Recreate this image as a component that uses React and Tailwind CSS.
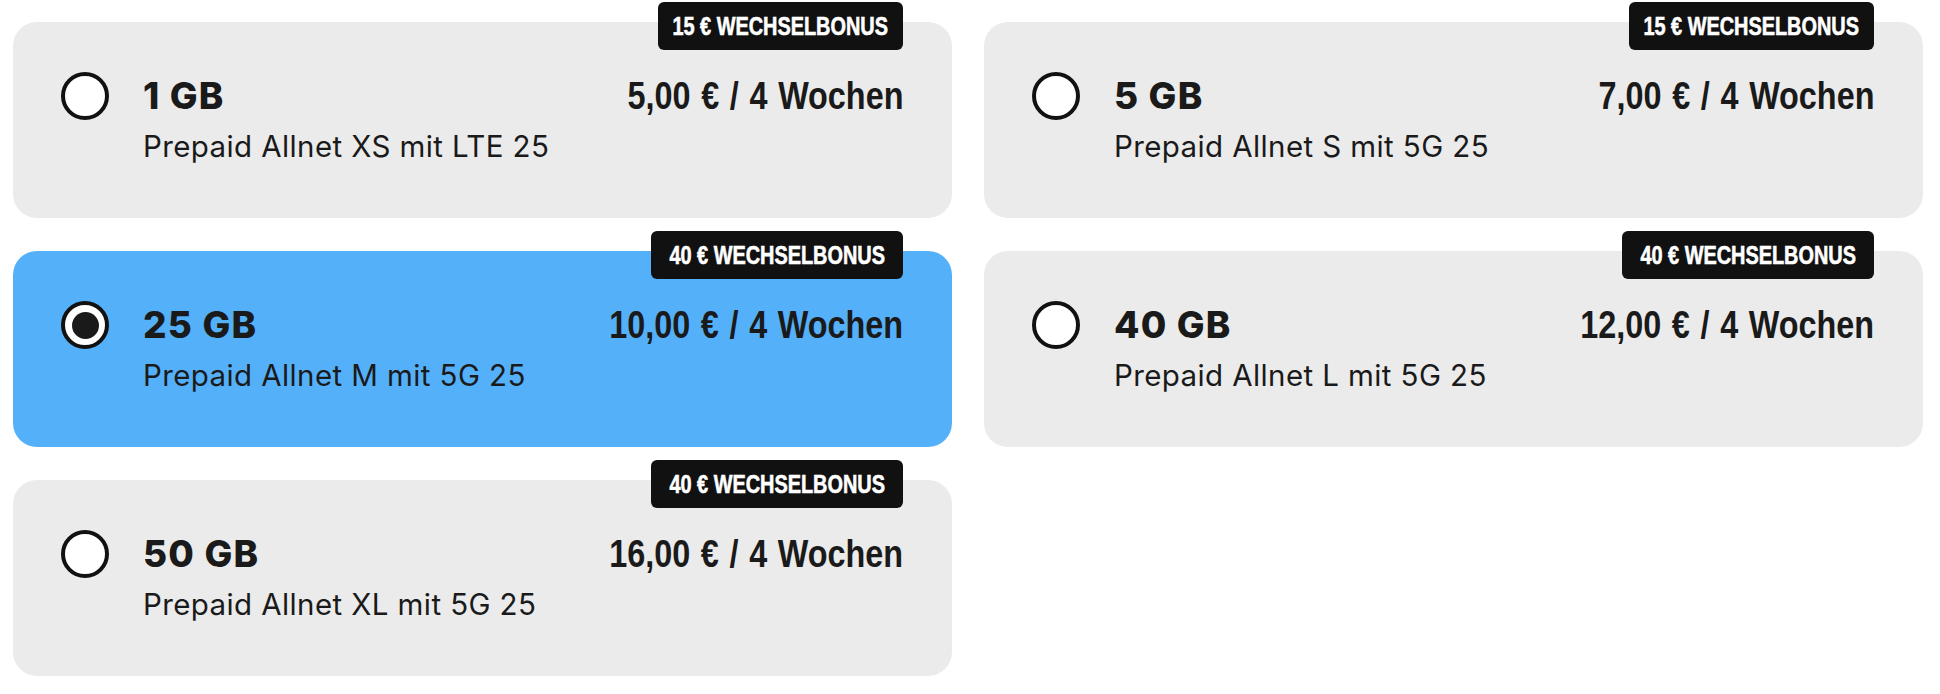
const plans = [
  { gb: "1 GB", name: "Prepaid Allnet XS mit LTE 25", price: "5,00 € / 4 Wochen", bonus: "15 € WECHSELBONUS", badgeW: "w-[245px]" },
  { gb: "5 GB", name: "Prepaid Allnet S mit 5G 25", price: "7,00 € / 4 Wochen", bonus: "15 € WECHSELBONUS", badgeW: "w-[245px]" },
  { gb: "25 GB", name: "Prepaid Allnet M mit 5G 25", price: "10,00 € / 4 Wochen", bonus: "40 € WECHSELBONUS", badgeW: "w-[252px]", selected: true },
  { gb: "40 GB", name: "Prepaid Allnet L mit 5G 25", price: "12,00 € / 4 Wochen", bonus: "40 € WECHSELBONUS", badgeW: "w-[252px]" },
  { gb: "50 GB", name: "Prepaid Allnet XL mit 5G 25", price: "16,00 € / 4 Wochen", bonus: "40 € WECHSELBONUS", badgeW: "w-[252px]" },
];

function PlanCard({ plan }) {
  return (
    <div
      className={`relative h-[196px] rounded-[24px] pl-12 pr-[49px] pt-[50px] ${
        plan.selected ? "bg-[#55b0fa]" : "bg-[#ebebeb]"
      }`}
    >
      {/* Badge */}
      <span
        className={`absolute -top-5 right-[49px] flex h-12 items-center justify-center rounded-md bg-[#111111] ${plan.badgeW}`}
      >
        <span className="inline-block scale-x-[0.78] whitespace-nowrap font-['Liberation_Sans',sans-serif] text-[25.5px] font-bold text-white [-webkit-text-stroke:0.6px_white]">
          {plan.bonus}
        </span>
      </span>

      <div className="flex items-center">
        {/* Radio */}
        <span className="flex h-12 w-12 shrink-0 items-center justify-center rounded-full border-4 border-[#111111] bg-white">
          {plan.selected ? <span className="h-[27px] w-[27px] rounded-full bg-[#1a1a1a]" /> : null}
        </span>

        <div className="ml-[34px] flex flex-1 items-baseline justify-between">
          <span className="font-['Inter',sans-serif] text-[37px] font-extrabold leading-[48px] tracking-[1.2px] text-[#1a1a1a]">{plan.gb}</span>
          <span className="inline-block origin-right scale-x-[0.83] whitespace-nowrap font-['Liberation_Sans',sans-serif] text-[39px] font-bold leading-[48px] text-[#1a1a1a] [word-spacing:2px]">
            {plan.price}
          </span>
        </div>
      </div>

      <p className="ml-[82px] mt-[8px] font-['Inter',sans-serif] text-[29.5px] font-normal leading-9 tracking-[0.4px] text-[#1a1a1a]">{plan.name}</p>
    </div>
  );
}

export default function App() {
  return (
    <div className="min-h-[694px] bg-white pl-[13px] pt-[22px]">
      <div className="grid grid-cols-[939px_939px] gap-x-8 gap-y-[33px]">
        {plans.map((plan) => (
          <PlanCard key={plan.gb} plan={plan} />
        ))}
      </div>
    </div>
  );
}
